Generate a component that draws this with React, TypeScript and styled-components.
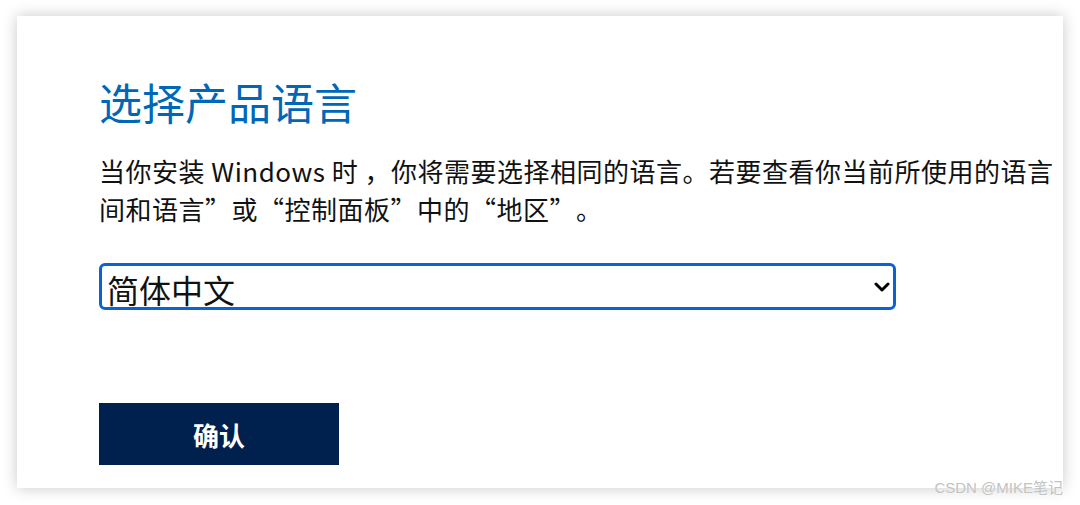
import React from "react";
import styled, { createGlobalStyle } from "styled-components";

const Global = createGlobalStyle`
  html, body { margin: 0; padding: 0; background: #ffffff; }
  body { font-family: "Noto Sans CJK SC", "Noto Sans", sans-serif; }
`;

const Page = styled.div`
  position: relative;
  width: 1080px;
  height: 505px;
  padding: 16px 17px 17px 17px;
  box-sizing: border-box;
  background: #ffffff;
`;

const Card = styled.div`
  width: 1046px;
  height: 472px;
  box-sizing: border-box;
  background: #ffffff;
  box-shadow: 0 0 14px rgba(0, 0, 0, 0.22);
  overflow: hidden;
  padding: 64px 0 0 82px;
  display: flex;
  flex-direction: column;
  align-items: flex-start;
  text-spacing-trim: space-all;
`;

const Title = styled.h1`
  margin: 0;
  font-size: 43px;
  line-height: 43px;
  font-weight: 400;
  color: #0067b8;
  font-family: "Noto Sans CJK SC", sans-serif;
`;

const Para = styled.p`
  margin: 29px 0 0 0;
  font-size: 26px;
  line-height: 38px;
  letter-spacing: 0.5px;
  color: #111111;
  font-family: "Noto Sans CJK SC", sans-serif;
  text-spacing-trim: space-all;
`;

const Line = styled.span`
  display: block;
  white-space: pre;
`;

const SelectWrap = styled.div`
  position: relative;
  margin-top: 35px;
  width: 797px;
  height: 47px;
`;

const Select = styled.select`
  appearance: none;
  -webkit-appearance: none;
  width: 100%;
  height: 100%;
  box-sizing: border-box;
  border: 3px solid #0b62d2;
  border-radius: 6px;
  background: #ffffff;
  padding: 0 40px 0 5px;
  font-size: 32px;
  font-family: "Noto Sans CJK SC", sans-serif;
  color: #111111;
  outline: none;
`;

const Chevron = styled.svg`
  position: absolute;
  right: 6px;
  top: 19px;
  width: 16px;
  height: 10px;
  pointer-events: none;
`;

const Button = styled.button`
  margin-top: 93px;
  width: 240px;
  height: 62px;
  border: none;
  background: #00204e;
  color: #ffffff;
  font-size: 26px;
  font-weight: 700;
  font-family: "Noto Sans CJK SC", sans-serif;
  cursor: pointer;
`;

const Watermark = styled.div`
  position: absolute;
  right: 17px;
  bottom: 8px;
  font-size: 15px;
  color: #c2c2c2;
  font-family: "Liberation Sans", "Noto Sans CJK SC", sans-serif;
  text-shadow: 0 0 1px #ffffff;
`;

export default function App() {
  return (
    <>
      <Global />
      <Page>
        <Card lang="zh-CN">
          <Title>选择产品语言</Title>
          <Para>
            <Line>当你安装 Windows 时 ，你将需要选择相同的语言。若要查看你当前所使用的语言</Line>
            <Line>间和语言”或“控制面板”中的“地区”。</Line>
          </Para>
          <SelectWrap>
            <Select defaultValue="zh-cn">
              <option value="zh-cn">简体中文</option>
              <option value="zh-tw">繁體中文</option>
              <option value="en-us">English (United States)</option>
            </Select>
            <Chevron viewBox="0 0 16 10">
              <path d="M2 2 L8 8 L14 2" fill="none" stroke="#000" strokeWidth="3" strokeLinecap="round" strokeLinejoin="round" />
            </Chevron>
          </SelectWrap>
          <Button>确认</Button>
        </Card>
        <Watermark>CSDN @MIKE笔记</Watermark>
      </Page>
    </>
  );
}
